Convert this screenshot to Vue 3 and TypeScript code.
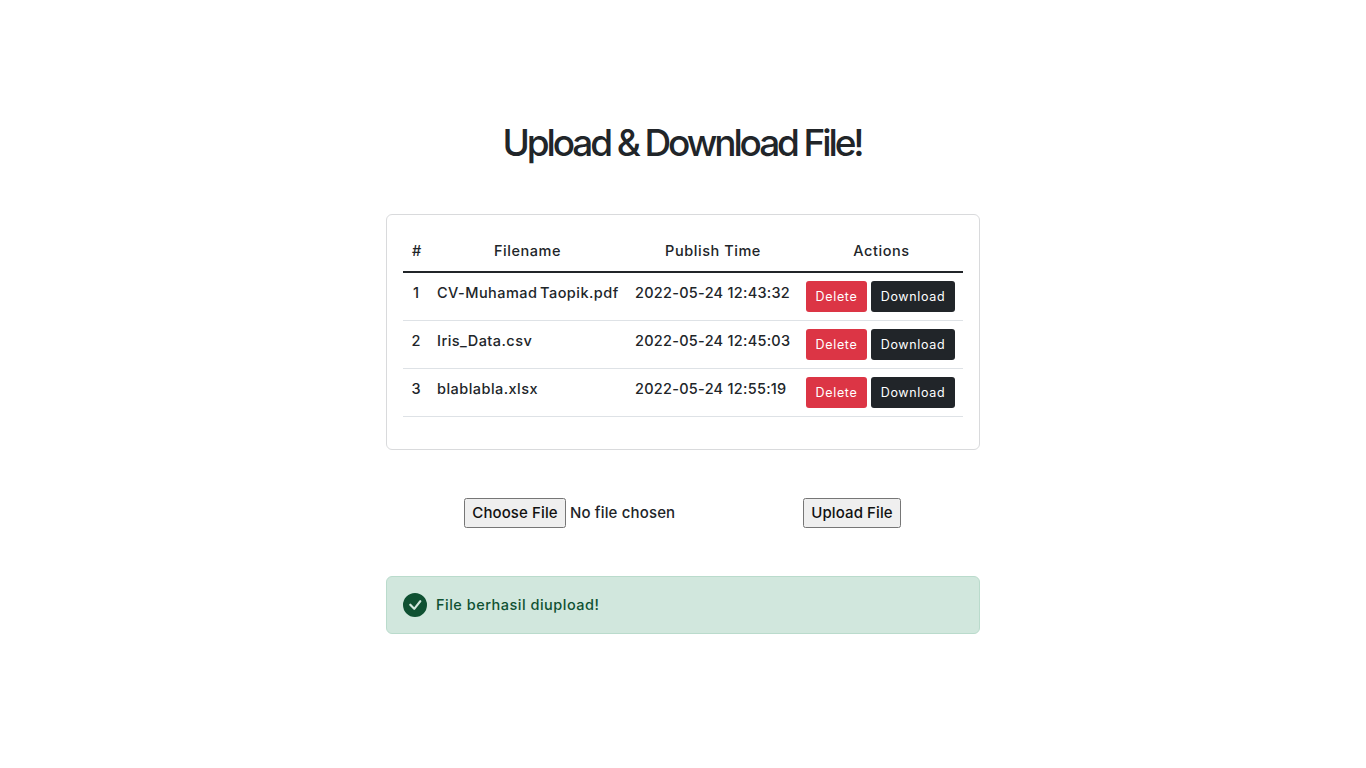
<script setup lang="ts">
interface FileRow { id: number; name: string; time: string }
const rows: FileRow[] = [
  { id: 1, name: 'CV-Muhamad Taopik.pdf', time: '2022-05-24 12:43:32' },
  { id: 2, name: 'Iris_Data.csv', time: '2022-05-24 12:45:03' },
  { id: 3, name: 'blablabla.xlsx', time: '2022-05-24 12:55:19' },
]
</script>

<template>
  <main class="page">
    <h1 class="title">Upload &amp; Download File!</h1>
    <section class="card">
      <table class="table">
        <thead>
          <tr>
            <th>#</th>
            <th>Filename</th>
            <th>Publish Time</th>
            <th>Actions</th>
          </tr>
        </thead>
        <tbody>
          <tr v-for="row in rows" :key="row.id">
            <td class="num">{{ row.id }}</td>
            <td class="name">{{ row.name }}</td>
            <td class="time">{{ row.time }}</td>
            <td class="actions">
              <button class="btn danger" type="button">Delete</button>
              <button class="btn dark" type="button">Download</button>
            </td>
          </tr>
        </tbody>
      </table>
    </section>
    <form class="upload" @submit.prevent>
      <input class="file" type="file" />
      <button class="native" type="submit">Upload File</button>
    </form>
    <div class="alert">
      <svg class="check" viewBox="0 0 16 16" width="24" height="24" fill="currentColor" aria-hidden="true">
        <path d="M16 8A8 8 0 1 1 0 8a8 8 0 0 1 16 0zm-3.97-3.03a.75.75 0 0 0-1.08.022L7.477 9.417 5.384 7.323a.75.75 0 0 0-1.06 1.06L6.97 11.03a.75.75 0 0 0 1.079-.02l3.992-4.99a.75.75 0 0 0-.01-1.05z" />
      </svg>
      <span>File berhasil diupload!</span>
    </div>
  </main>
</template>

<style>
body { margin: 0; background: #fff; }
</style>

<style scoped>
.page {
  box-sizing: border-box;
  width: 594px;
  margin-left: 386px;
  padding-top: 119px;
  font-family: Inter, "Liberation Sans", sans-serif;
  color: #212529;
  font-size: 15px;
  font-weight: 500;
}
.title {
  margin: 0 0 47px;
  padding-right: 2px;
  font-size: 37px;
  line-height: 48px;
  font-weight: 500;
  letter-spacing: -3.12px;
  text-align: center;
}
.card {
  box-sizing: border-box;
  height: 236px;
  padding: 16px;
  border: 1px solid #d9dadc;
  border-radius: 6px;
}
.table {
  width: 560px;
  border-collapse: collapse;
  table-layout: fixed;
}
th {
  height: 41px;
  padding: 0 4px 2px;
  box-sizing: border-box;
  border-bottom: 2px solid #212529;
  text-align: center;
  font-weight: 500;
  font-size: 14.5px;
  letter-spacing: .55px;
}
th:nth-child(1), td:nth-child(1) { width: 26px; }
th:nth-child(2), td:nth-child(2) { width: 197px; }
th:nth-child(3), td:nth-child(3) { width: 174px; }
th:nth-child(1) { padding-left: 5px; padding-right: 3px; }
td {
  box-sizing: border-box;
  height: 48px;
  padding: 9px 8px 8px;
  border-bottom: 1px solid #dee2e6;
  vertical-align: top;
  font-size: 14.5px;
  line-height: 22px;
  white-space: nowrap;
}
td.num { padding-left: 0; padding-right: 0; text-align: center; }
td.name { letter-spacing: .46px; word-spacing: -1.7px; }
td.time { padding-left: 9px; letter-spacing: .27px; }
td.actions { padding: 8px 0 0 6px; }
.btn {
  height: 31px;
  padding: 0;
  margin-right: 4px;
  border: 0;
  border-radius: 3px;
  color: #fff;
  font: 400 12.5px Inter, "Liberation Sans", sans-serif;
  letter-spacing: .65px;
  vertical-align: top;
}
.danger { width: 61px; background: #dc3545; }
.dark { width: 84px; background: #212529; margin-right: 0; }
.upload {
  display: flex;
  align-items: center;
  height: 30px;
  margin-top: 48px;
  padding-left: 78px;
}
.file {
  width: 339px;
  height: 30px;
  font: 500 15px Inter, "Liberation Sans", sans-serif;
  color: #212529;
  letter-spacing: .15px;
}
.file::file-selector-button {
  box-sizing: border-box;
  width: 102px;
  height: 30px;
  padding: 0 0 2px;
  margin-right: 4px;
  font: 500 15px Inter, "Liberation Sans", sans-serif;
  letter-spacing: .1px;
  color: #111;
}
.native {
  width: 98px;
  height: 30px;
  padding: 0 0 2px;
  font: 500 15px Inter, "Liberation Sans", sans-serif;
  letter-spacing: .1px;
  color: #111;
}
.alert {
  box-sizing: border-box;
  display: flex;
  align-items: center;
  gap: 9px;
  height: 58px;
  margin-top: 48px;
  padding: 0 16px;
  background: #d1e7dd;
  border: 1px solid #badbcc;
  border-radius: 6px;
  color: #0f5132;
  font-size: 14.5px;
  font-weight: 500;
  letter-spacing: .5px;
}
.alert span { position: relative; top: -1px; }
.check { flex: none; }
</style>
